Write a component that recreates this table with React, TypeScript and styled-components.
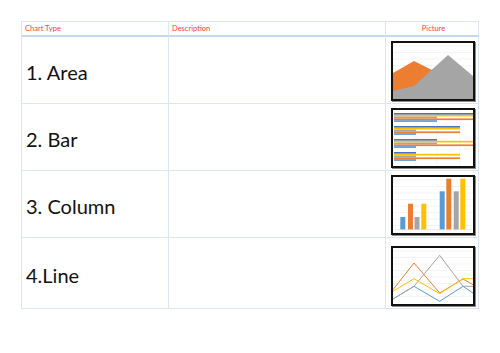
import { Fragment } from "react";
import styled, { createGlobalStyle } from "styled-components";

const GlobalStyle = createGlobalStyle`
  html, body {
    margin: 0;
    padding: 0;
    background: #ffffff;
  }
  body {
    font-family: Lato, "Open Sans", "Liberation Sans", sans-serif;
  }
`;

const Page = styled.div`
  width: 500px;
  height: 353px;
  padding: 21px 0 0 21px;
  box-sizing: border-box;
  overflow: hidden;
`;

const Table = styled.div`
  display: grid;
  grid-template-columns: 147px 217px 93px;
  grid-template-rows: 15px 67px 67px 67px 71px;
  width: 458px;
  border-top: 1px solid #dbe5f3;
  border-left: 1px solid #dbe5f3;
  box-sizing: border-box;
`;

const HeadCell = styled.div<{ $center?: boolean }>`
  display: flex;
  align-items: flex-end;
  justify-content: ${(p) => (p.$center ? "center" : "flex-start")};
  padding: 0 0 2px 3px;
  font-size: 7.5px;
  color: #ff3b3b;
  border-right: 1px solid #dbe5f3;
  border-bottom: 2px solid #c6d8ee;
  box-sizing: border-box;
`;

const Cell = styled.div`
  display: flex;
  align-items: center;
  padding: 4px 0 0 4px;
  font-size: 20px;
  color: #111;
  border-right: 1px solid #dbe5f3;
  border-bottom: 1px solid #dbe5f3;
  box-sizing: border-box;
`;

const PictureCell = styled.div`
  display: flex;
  align-items: flex-end;
  justify-content: center;
  padding-bottom: 2px;
  padding-left: 1px;
  border-right: 1px solid #dbe5f3;
  border-bottom: 1px solid #dbe5f3;
  box-sizing: border-box;
`;

const ChartFrame = styled.div`
  width: 80px;
  height: 56px;
  border: 2px solid #111;
  box-shadow: 1px 1px 0 #8a8a8a;
  background: #fff;
  overflow: hidden;
  svg {
    display: block;
  }
`;

const BLUE = "#5b9bd5";
const ORANGE = "#ed7d31";
const GRAY = "#a5a5a5";
const YELLOW = "#ffc000";

const GridLines = ({ step = 6.5 }: { step?: number }) => (
  <g stroke="#ececec" strokeWidth={0.6}>
    {Array.from({ length: Math.floor(56 / step) }, (_, i) => (
      <line key={i} x1={0} x2={80} y1={3 + i * step} y2={3 + i * step} />
    ))}
  </g>
);

const AreaChart = () => (
  <svg width={80} height={56} viewBox="0 0 80 56">
    <GridLines />
    <polygon points="0,30 21,18 45,30 80,34 80,56 0,56" fill={ORANGE} />
    <polygon points="0,48 21,43 55,12 80,33 80,56 0,56" fill={GRAY} />
  </svg>
);

const bars = [
  [80, 80, 44, 80, 44],
  [67, 67, 23, 67, 23],
  [44, 80, 44, 80, 23],
  [23, 67, 23, 67, 23],
];
const barColors = ["#4472c4", YELLOW, GRAY, ORANGE, BLUE];

const BarChart = () => (
  <svg width={80} height={56} viewBox="0 0 80 56">
    <g stroke="#eeeeee" strokeWidth={0.6}>
      {[23, 44, 67].map((x) => (
        <line key={x} x1={x} x2={x} y1={0} y2={56} />
      ))}
    </g>
    {bars.map((g, gi) =>
      g.map((w, bi) => (
        <rect
          key={`${gi}-${bi}`}
          x={1}
          y={3 + gi * 13 + bi * 1.8}
          width={w - 1}
          height={1.7}
          fill={barColors[bi]}
        />
      ))
    )}
  </svg>
);

const columns = [
  { x: 7.3, top: 40, c: BLUE },
  { x: 15, top: 26.7, c: ORANGE },
  { x: 21.5, top: 40, c: GRAY },
  { x: 28.3, top: 26.7, c: YELLOW },
  { x: 46.7, top: 14.3, c: BLUE },
  { x: 53.3, top: 1.7, c: ORANGE },
  { x: 60.7, top: 14.3, c: GRAY },
  { x: 67.3, top: 1.7, c: YELLOW },
];

const ColumnChart = () => (
  <svg width={80} height={56} viewBox="0 0 80 56">
    <GridLines />
    {columns.map((b, i) => (
      <rect key={i} x={b.x} y={b.top} width={5} height={52.7 - b.top} fill={b.c} />
    ))}
    <line x1={2} x2={78} y1={52.7} y2={52.7} stroke="#d9d9d9" strokeWidth={0.6} />
  </svg>
);

const lines = [
  { c: BLUE, pts: "0,51 21,38.3 46.7,53.3 70,38.3 80,45" },
  { c: GRAY, pts: "0,51 21,38.3 46.7,7.3 70,38.3 80,38.3" },
  { c: ORANGE, pts: "0,41.7 21,15 46.7,45 70,31 80,36.7" },
  { c: YELLOW, pts: "0,43.3 21,30.7 46.7,45.7 70,30.7 80,30.7" },
];

const LineChart = () => (
  <svg width={80} height={56} viewBox="0 0 80 56">
    <GridLines />
    {lines.map((l) => (
      <polyline key={l.c} points={l.pts} fill="none" stroke={l.c} strokeWidth={1} />
    ))}
  </svg>
);

const rows = [
  { label: "1. Area", chart: <AreaChart /> },
  { label: "2. Bar", chart: <BarChart /> },
  { label: "3. Column", chart: <ColumnChart /> },
  { label: "4.Line", chart: <LineChart /> },
];

export default function App() {
  return (
    <Page>
      <GlobalStyle />
      <Table>
        <HeadCell>Chart Type</HeadCell>
        <HeadCell>Description</HeadCell>
        <HeadCell $center>Picture</HeadCell>
        {rows.map((r) => (
          <Fragment key={r.label}>
            <Cell>{r.label}</Cell>
            <Cell />
            <PictureCell>
              <ChartFrame>{r.chart}</ChartFrame>
            </PictureCell>
          </Fragment>
        ))}
      </Table>
    </Page>
  );
}
